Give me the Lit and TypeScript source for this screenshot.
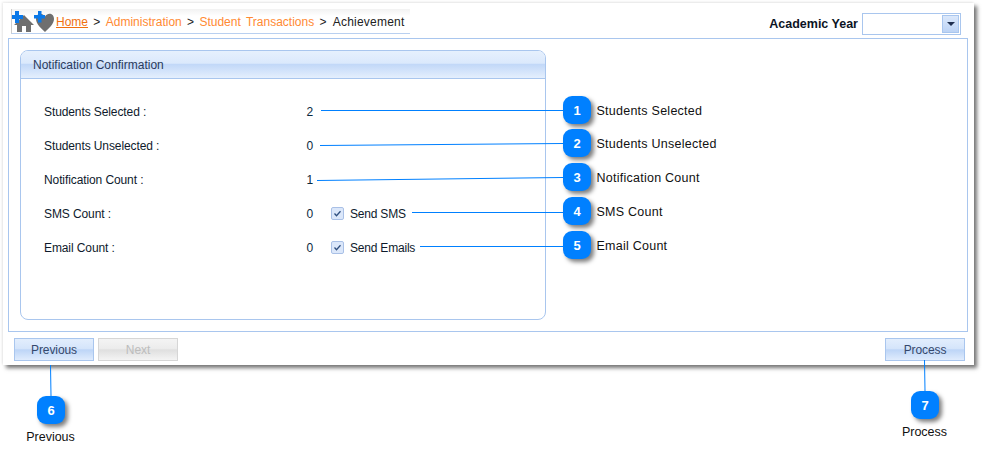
import { LitElement, html, css, svg } from "lit";
import { customElement } from "lit/decorators.js";

const rows = [
  { label: "Students Selected :", value: "2" },
  { label: "Students Unselected :", value: "0" },
  { label: "Notification Count :", value: "1" },
  { label: "SMS Count :", value: "0", check: "Send SMS" },
  { label: "Email Count :", value: "0", check: "Send Emails" },
];

const lines = [
  [321, 110.5, 563, 110.5],
  [320, 145.5, 563, 143.5],
  [317, 180.5, 563, 177.5],
  [412, 212.5, 563, 212.5],
  [420, 246.5, 563, 246.5],
  [50.5, 365, 51, 396],
  [924.5, 360, 925, 391],
];

const callouts = [
  { n: 1, x: 563, y: 96, label: "Students Selected" },
  { n: 2, x: 563, y: 129, label: "Students Unselected" },
  { n: 3, x: 563, y: 163, label: "Notification Count" },
  { n: 4, x: 563, y: 197, label: "SMS Count" },
  { n: 5, x: 563, y: 231, label: "Email Count" },
];

const bottoms = [
  { n: 6, x: 37, y: 396, label: "Previous", cx: 51, ly: 429 },
  { n: 7, x: 911, y: 391, label: "Process", cx: 925, ly: 424 },
];

@customElement("app-root")
export class AppRoot extends LitElement {
  static styles = css`
    :host {
      display: block;
      position: relative;
      width: 982px;
      height: 461px;
      overflow: hidden;
      background: #fff;
      font-family: "Liberation Sans", sans-serif;
      font-size: 12px;
      color: #111;
    }
    .window {
      position: absolute;
      left: 3px;
      top: 3px;
      width: 971px;
      height: 362px;
      box-sizing: border-box;
      padding: 6px 5px 0 5px;
      background: #fff;
      display: flex;
      flex-direction: column;
      box-shadow: 3px 3px 4px rgba(0, 0, 0, 0.55), -1px -1px 2px rgba(0, 0, 0, 0.08);
    }
    .top {
      display: flex;
      justify-content: space-between;
      height: 29px;
    }
    .crumbs {
      margin-left: 3px;
      width: 399px;
      height: 25px;
      box-sizing: border-box;
      border-left: 1px solid #ccc;
      border-bottom: 1px solid #b9d0f0;
      background: linear-gradient(#f2f2f2, #fff 30%);
      display: flex;
      align-items: center;
      white-space: pre;
      word-spacing: 2px;
      color: #222;
      padding-top: 1px;
    }
    .icons { display: block; flex: none; margin-top: -1px; }
    .crumbs a { color: #ff8a33; }
    .crumbs a.home { color: #f07010; text-decoration: underline; }
    .last { letter-spacing: 0.2px; margin-left: 1px; }
    .year {
      display: flex;
      align-items: center;
      gap: 4px;
      margin: 4px 8px 0 0;
      height: 22px;
      font-weight: 700;
      font-size: 12.5px;
      color: #0c1424;
    }
    .select {
      width: 99px;
      height: 22px;
      box-sizing: border-box;
      border: 1px solid #a9c6ee;
      display: flex;
      justify-content: flex-end;
      padding: 1px;
    }
    .arrow {
      width: 17px;
      box-sizing: border-box;
      border: 1px solid #a9c6ee;
      background: linear-gradient(#dbe8fb, #bcd3f5);
      display: flex;
      align-items: center;
      justify-content: center;
    }
    .arrow::after {
      content: "";
      border-left: 4px solid transparent;
      border-right: 4px solid transparent;
      border-top: 4px solid #1f2f4f;
    }
    .content {
      height: 294px;
      width: 960px;
      box-sizing: border-box;
      border: 1px solid #a9c6ee;
      padding: 11px;
    }
    .panel {
      width: 526px;
      height: 270px;
      box-sizing: border-box;
      border: 1px solid #a9c6ee;
      border-radius: 8px;
      overflow: hidden;
    }
    .panel-head {
      height: 28px;
      box-sizing: border-box;
      border-bottom: 1px solid #a9c6ee;
      padding-left: 12px;
      display: flex;
      align-items: center;
      color: #2a3a5c;
      background: linear-gradient(#e6f0fd, #dbe9fc 45%, #c2d8f8 50%, #e4effd);
    }
    .rows {
      padding-top: 15px;
      display: grid;
      grid-auto-rows: 34px;
    }
    .row {
      display: grid;
      grid-template-columns: 246px 23px auto;
      align-items: center;
      padding: 1px 0 0 23px;
      box-sizing: border-box;
      letter-spacing: -0.1px;
      color: #0e1a2c;
    }
    .value { text-align: right; color: #0a2a40; }
    .check {
      display: flex;
      align-items: center;
      gap: 6px;
      margin-left: 18px;
      letter-spacing: -0.2px;
    }
    .box {
      width: 13px;
      height: 13px;
      display: block;
      flex: none;
      margin-top: -1px;
    }
    .bar {
      display: flex;
      justify-content: space-between;
      padding: 6px 4px 0 6px;
    }
    .group { display: flex; gap: 4px; }
    .btn {
      width: 80px;
      height: 23px;
      box-sizing: border-box;
      border: 1px solid #a9c6ee;
      display: flex;
      align-items: center;
      justify-content: center;
      letter-spacing: -0.1px;
      color: #34486c;
      background: linear-gradient(#e3eefd, #d5e5fb 45%, #bdd5f7 52%, #e0ecfd);
    }
    .btn.off {
      border-color: #d6d6d6;
      color: #bcbcbc;
      background: linear-gradient(#f4f4f4, #ececec 45%, #dfdfdf 52%, #f4f4f4);
    }
    .overlay {
      position: absolute;
      left: 0;
      top: 0;
      width: 982px;
      height: 461px;
      pointer-events: none;
    }
    .badge {
      position: absolute;
      width: 28px;
      height: 28px;
      border-radius: 9px;
      background: #0080ff;
      color: #fff;
      font: 700 13px "Liberation Sans", sans-serif;
      display: flex;
      align-items: center;
      justify-content: center;
      box-shadow: 3px 3px 4px rgba(0, 0, 0, 0.5);
    }
    .cap {
      position: absolute;
      font: 12.5px/16px "Liberation Sans", sans-serif;
      letter-spacing: 0.25px;
      color: #111;
      white-space: nowrap;
      margin: 1px 0 0 -0.5px;
    }
    .cap.center { transform: translateX(-50%); letter-spacing: 0; margin-top: 0; }
  `;

  private renderIcons() {
    return html`<svg class="icons" width="44" height="24" viewBox="0 0 44 24">
      <path fill="#6f6f6f" d="M12 6 L22 16 L19 16 L19 23 L14 23 L14 17 L10 17 L10 23 L5 23 L5 16 L2 16Z" />
      <path fill="#0a78e8" d="M3 2h4v4h4v4H7v4H3v-4H-1V6h4z" />
      <path fill="#6f6f6f" d="M33 23 C29 19 24 15 24 10 C24 4.500 30 3 33 7.500 C36 3 42 4.500 42 10 C42 15 37 19 33 23Z" />
      <path fill="#0a78e8" d="M26 2h3.500v4h3.500v3.500h-3.500v4H26v-4h-4V6h4z" />
    </svg>`;
  }

  private renderBox() {
    return html`<svg class="box" viewBox="0 0 13 13">
      <rect x=".5" y=".5" width="12" height="12" rx="1.5" fill="#dbe7fa" stroke="#a9c0e6" />
      <path d="M3.5 6.5 5.5 8.7 9.5 4.2" fill="none" stroke="#2f4f7f" stroke-width="1.3" />
    </svg>`;
  }

  render() {
    return html`
      <div class="window">
        <div class="top">
          <div class="crumbs">${this.renderIcons()}<a class="home">Home</a> &gt; <a>Administration</a> &gt; <a>Student Transactions</a> &gt; <span class="last">Achievement</span></div>
          <div class="year">Academic Year <div class="select"><div class="arrow"></div></div></div>
        </div>
        <div class="content">
          <div class="panel">
            <div class="panel-head">Notification Confirmation</div>
            <div class="rows">
              ${rows.map(
                (r) => html`<div class="row">
                  <span>${r.label}</span><span class="value">${r.value}</span>
                  ${r.check ? html`<span class="check">${this.renderBox()}${r.check}</span>` : html`<span></span>`}
                </div>`
              )}
            </div>
          </div>
        </div>
        <div class="bar">
          <div class="group"><div class="btn">Previous</div><div class="btn off">Next</div></div>
          <div class="btn">Process</div>
        </div>
      </div>
      <svg class="overlay" viewBox="0 0 982 461">
        ${lines.map(
          (l) => svg`<line x1=${l[0]} y1=${l[1]} x2=${l[2]} y2=${l[3]} stroke="#0080ff" stroke-width="1" />`
        )}
      </svg>
      ${callouts.map(
        (c) => html`<div class="badge" style="left:${c.x}px;top:${c.y}px">${c.n}</div>
          <div class="cap" style="left:${c.x + 34}px;top:${c.y + 6}px">${c.label}</div>`
      )}
      ${bottoms.map(
        (b) => html`<div class="badge" style="left:${b.x}px;top:${b.y}px">${b.n}</div>
          <div class="cap center" style="left:${b.cx}px;top:${b.ly}px">${b.label}</div>`
      )}
    `;
  }
}
